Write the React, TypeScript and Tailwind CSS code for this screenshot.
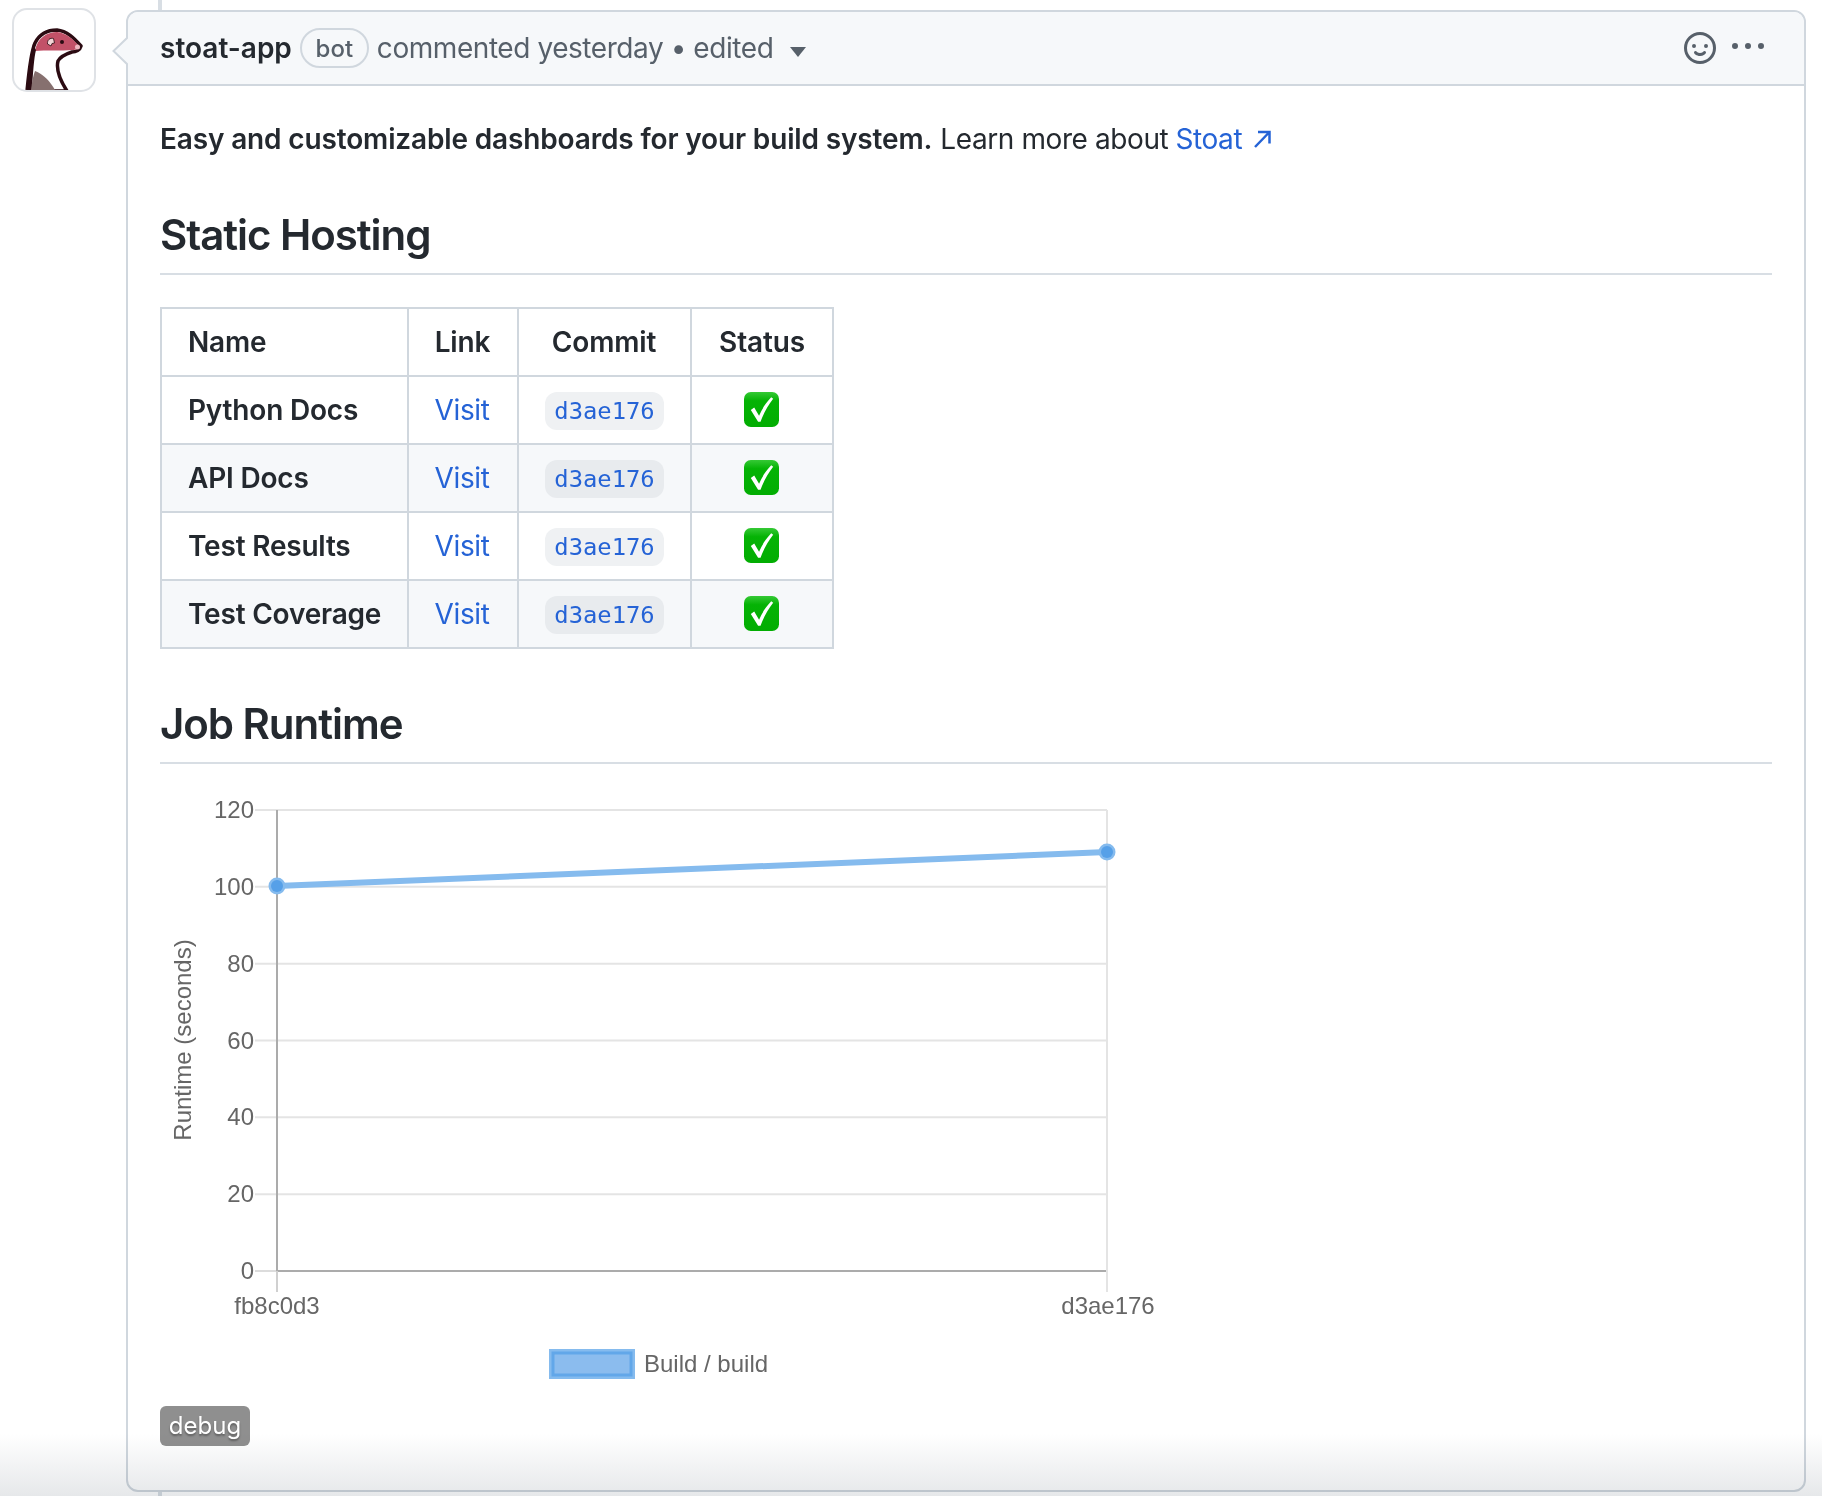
const C = "text-[#2563d6]";
const rows = ["Python Docs", "API Docs", "Test Results", "Test Coverage"];
const border = "border-2 border-[#d0d7de]";

function Otter() {
  return (
    <svg viewBox="14 10 80 80" className="block h-[80px] w-[80px]">
      <path d="M27 91C29 70 31 52 35 43C40 33 49 30 57 30C67 31 74 38 81 46C80 50 76 52 72 52C66 54 60 57 58 61C56 69 60 80 67 91Z" fill="#fff" stroke="#2b0b12" strokeWidth="3.5" strokeLinejoin="round" />
      <path d="M35 51C37 38 47 32 57 32C66 33 73 39 79 46C79 49 76 50 72 50C62 51 45 50 35 51Z" fill="#c25168" />
      <path d="M33 44C31 55 30 70 28 90L32 90C33 72 34 58 36 50Z" fill="#2b0b12" />
      <path d="M31 90C32 82 33 76 35 71C43 74 50 81 55 90Z" fill="#86706f" />
      <path d="M47.5 44C47 40 50 37.5 53.5 38.5L54.5 43L52 43.5L51 46Z" fill="#f3d5d8" stroke="#2b0b12" strokeWidth="0.8" />
      <circle cx="62" cy="42" r="2" fill="#2b0b12" />
      <circle cx="77.5" cy="47" r="2.5" fill="#eeb9c2" />
    </svg>
  );
}

function Check() {
  return (
    <svg viewBox="0 0 36 36" className="relative -top-px right-px mx-auto block h-[35px] w-[35px]">
      <defs>
        <linearGradient id="chk" x1="0" y1="0" x2="0" y2="1">
          <stop offset="0" stopColor="#35c935" />
          <stop offset="0.25" stopColor="#05b305" />
          <stop offset="1" stopColor="#02ad02" />
        </linearGradient>
      </defs>
      <rect width="36" height="36" rx="7" fill="url(#chk)" />
      <path d="M7 18.5L10.5 16L15.5 24.5C18.5 17.5 22.5 11 28 5.5L30 7C25 13.5 20.5 21 17 30.5H14.5Z" fill="#fff" />
    </svg>
  );
}

function H2({ children }: { children: string }) {
  return (
    <h2 className="mt-12 mb-8 border-b-2 border-[#d8dee4] pt-px pb-[11.6px] text-[42px] leading-[52.5px] font-semibold tracking-[-1.05px]">
      {children}
    </h2>
  );
}

function Chart() {
  const ys = [810, 886.8, 963.7, 1040.5, 1117.3, 1194.2, 1271];
  const labels = ["120", "100", "80", "60", "40", "20", "0"];
  const tick = { fontFamily: "'Liberation Sans', sans-serif", fontSize: 24, fill: "#666" };
  return (
    <svg viewBox="160 796 1100 594" className="block h-[594px] w-[1100px]">
      {ys.slice(0, 6).map((y) => (
        <line key={y} x1="255" x2="1107" y1={y} y2={y} stroke="#e4e4e4" strokeWidth="2" />
      ))}
      <line x1="255" x2="277" y1="1271" y2="1271" stroke="#dcdcdc" strokeWidth="2" />
      <line x1="277" x2="1107" y1="1271" y2="1271" stroke="#ababab" strokeWidth="2" />
      <line x1="277" x2="277" y1="810" y2="1271" stroke="#ababab" strokeWidth="2" />
      <line x1="277" x2="277" y1="1271" y2="1292" stroke="#d0d0d0" strokeWidth="2" />
      <line x1="1107" x2="1107" y1="810" y2="1292" stroke="#e4e4e4" strokeWidth="2" />
      {labels.map((l, i) => (
        <text key={l} x="254" y={ys[i] + 8} textAnchor="end" {...tick}>{l}</text>
      ))}
      <text x="277" y="1314" textAnchor="middle" {...tick}>fb8c0d3</text>
      <text x="1108" y="1314" textAnchor="middle" {...tick}>d3ae176</text>
      <text transform="translate(191 1040) rotate(-90)" textAnchor="middle" {...tick}>Runtime (seconds)</text>
      <line x1="277" y1="886" x2="1107" y2="852" stroke="#85bbee" strokeWidth="6" />
      {[[277, 886], [1107, 852]].map(([x, y]) => (
        <g key={x}>
          <circle cx={x} cy={y} r="8.5" fill="#85bbee" />
          <circle cx={x} cy={y} r="6" fill="#56a0e8" />
        </g>
      ))}
      <rect x="549" y="1349" width="86" height="30" fill="#85bbee" />
      <rect x="553" y="1353" width="78" height="22" fill="#8bbcee" stroke="#62a7e9" strokeWidth="3" />
      <text x="644" y="1372" {...tick}>Build / build</text>
    </svg>
  );
}

export default function App() {
  return (
    <div className="relative h-[1496px] w-[1822px] overflow-hidden bg-white font-['Inter',sans-serif] text-[28px] leading-[42px] text-[#24292f]">
      <div className="absolute top-0 bottom-0 left-[158px] w-[4px] bg-[#d8dee4]" />
      <div className="relative flex items-start gap-[30px] pt-[10px] pl-[12px]">
        <div className="-mt-[2px] h-[84px] w-[84px] shrink-0 overflow-hidden rounded-[15px] border-2 border-[#dfe2e6] bg-white">
          <Otter />
        </div>
        <div className="relative h-[1482px] w-[1680px] rounded-[12px] border-2 border-[#d0d7de] bg-white">
          <svg viewBox="0 0 16 30" className="absolute top-[24px] left-[-16px] h-[30px] w-[16px]">
            <path d="M16 1L1.5 15L16 29" fill="#f6f8fa" stroke="#d0d7de" strokeWidth="2" />
          </svg>
          <div className="flex h-[74px] items-center justify-between rounded-t-[10px] border-b-2 border-[#d0d7de] bg-[#f6f8fa] pr-[40px] pl-8">
            <div className="flex items-center text-[#57606a]">
              <span className="font-semibold text-[#24292f]">stoat-app</span>
              <span className="ml-2 flex h-[40px] w-[69px] items-center justify-center rounded-full border-2 border-[#d0d7de] pt-[2px] text-[24px] font-medium">bot</span>
              <span className="ml-2 tracking-[-0.44px]">commented yesterday • edited</span>
              <svg viewBox="0 0 16 10" className="mt-[8px] ml-[17px] h-[10px] w-[16px]">
                <path d="M0 0H16L8 10Z" fill="#57606a" />
              </svg>
            </div>
            <div className="flex items-center gap-4 text-[#57606a]">
              <svg viewBox="0 0 16 16" className="h-[32px] w-[32px]" fill="currentColor">
                <path d="M8 0a8 8 0 1 1 0 16A8 8 0 0 1 8 0ZM1.5 8a6.5 6.5 0 1 0 13 0 6.5 6.5 0 0 0-13 0Zm3.82 1.636a.75.75 0 0 1 1.038.175l.007.009c.103.118.22.222.35.31.264.178.683.37 1.285.37.602 0 1.02-.192 1.285-.371.13-.088.247-.192.35-.31l.007-.008a.75.75 0 0 1 1.222.87l-.022-.015c.02.013.021.015.021.015v.001l-.001.002-.002.003-.005.007-.014.019a2.066 2.066 0 0 1-.184.213c-.16.166-.338.316-.53.445-.63.418-1.37.638-2.127.629-.946 0-1.652-.308-2.126-.63a3.331 3.331 0 0 1-.715-.657l-.014-.02-.005-.006-.002-.003v-.002h-.001l.613-.432-.614.43a.75.75 0 0 1 .183-1.044ZM12 7a1 1 0 1 1-2 0 1 1 0 0 1 2 0ZM5 8a1 1 0 1 0 0-2 1 1 0 0 0 0 2Zm5.25 2.25.592.416a97.71 97.71 0 0 0-.592-.416Z" />
              </svg>
              <svg viewBox="0 0 16 16" className="-mt-[2px] h-[32px] w-[32px]" fill="currentColor">
                <path d="M8 9a1.5 1.5 0 1 0 0-3 1.5 1.5 0 0 0 0 3ZM1.5 9a1.5 1.5 0 1 0 0-3 1.5 1.5 0 0 0 0 3Zm13 0a1.5 1.5 0 1 0 0-3 1.5 1.5 0 0 0 0 3Z" />
              </svg>
            </div>
          </div>
          <div className="px-8 pt-8">
            <p className="flex items-center tracking-[-0.4px]">
              <strong className="font-semibold tracking-[-0.15px]">Easy and customizable dashboards for your build system.</strong>
              <span className="ml-[8px]">Learn more about</span>
              <span className={`ml-[7px] ${C}`}>Stoat</span>
              <svg viewBox="0 0 18 18" className="ml-[11px] h-[18px] w-[18px]" fill="none" stroke="#2563d6" strokeWidth="2.5">
                <path d="M2 17L16 2.5M5 2H16.5V13.5" />
              </svg>
            </p>
            <H2>Static Hosting</H2>
            <table className="w-[672px] table-fixed border-collapse">
              <colgroup>
                <col className="w-[247px]" />
                <col className="w-[110px]" />
                <col className="w-[173px]" />
                <col className="w-[142px]" />
              </colgroup>
              <thead>
                <tr className="h-[68px] font-semibold">
                  <th className={`${border} py-0 pl-[26px] pr-0 text-left font-semibold whitespace-nowrap tracking-[-0.15px]`}>Name</th>
                  <th className={`${border} py-0 pr-[1px] text-center font-semibold tracking-[-0.15px]`}>Link</th>
                  <th className={`${border} py-0 pr-[1px] text-center font-semibold tracking-[-0.15px]`}>Commit</th>
                  <th className={`${border} py-0 text-center font-semibold tracking-[-0.15px]`}>Status</th>
                </tr>
              </thead>
              <tbody>
                {rows.map((r, i) => (
                  <tr key={r} className={`h-[68px] ${i % 2 === 1 ? "bg-[#f6f8fa]" : "bg-white"}`}>
                    <td className={`${border} py-0 pl-[26px] pr-0 font-semibold whitespace-nowrap tracking-[-0.2px]`}>{r}</td>
                    <td className={`${border} py-0 pr-[2px] text-center tracking-[-0.4px] ${C}`}>Visit</td>
                    <td className={`${border} py-0 text-center`}>
                      <span className={`mx-auto mt-[2px] block h-[38px] w-[119px] rounded-[12px] font-['DejaVu_Sans_Mono',monospace] text-[23.8px] leading-[38px] ${C} ${i % 2 === 1 ? "bg-[#e8ebee]" : "bg-[#eff1f3]"}`}>d3ae176</span>
                    </td>
                    <td className={`${border} py-0`}><Check /></td>
                  </tr>
                ))}
              </tbody>
            </table>
            <H2>Job Runtime</H2>
            <Chart />
            <div className="mt-4 h-[40px] w-[90px] rounded-[6px] bg-[#8f8f8f] text-center text-[24px] leading-[40px] text-white [text-shadow:0_2px_2px_rgba(0,0,0,0.35)]">debug</div>
          </div>
        </div>
      </div>
      <div className="pointer-events-none absolute right-0 bottom-0 left-0 h-[62px] bg-gradient-to-b from-white to-[#e6e8ea] mix-blend-multiply" />
    </div>
  );
}
